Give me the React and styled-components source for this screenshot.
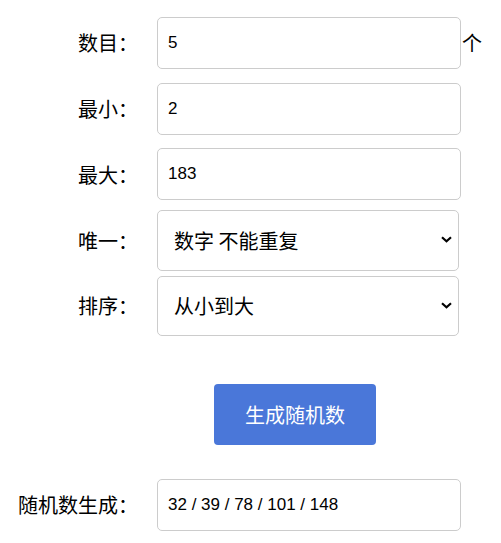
import React, { useState } from "react";
import styled, { createGlobalStyle } from "styled-components";

const GlobalStyle = createGlobalStyle`
  body {
    margin: 0;
    background: #ffffff;
    font-family: "Liberation Sans", "Noto Sans CJK SC", sans-serif;
    color: #000000;
  }
`;

const Page = styled.div`
  width: 501px;
  padding-top: 10px;
`;

const Row = styled.div`
  display: flex;
  align-items: center;
  height: 65.75px;
`;

const Label = styled.label`
  width: 138px;
  margin-right: 19px;
  text-align: right;
  font-size: 20px;
  font-family: "Noto Sans CJK SC", sans-serif;
  white-space: nowrap;
`;

const TextInput = styled.input`
  box-sizing: border-box;
  width: 304px;
  height: 52px;
  padding: 0 10px;
  border: 1px solid #cccccc;
  border-radius: 5px;
  font-size: 17px;
  font-family: "Liberation Sans", "Noto Sans CJK SC", sans-serif;
  color: #000000;
  outline: none;
`;

const Unit = styled.span`
  font-size: 20px;
  font-family: "Noto Sans CJK SC", sans-serif;
  margin-left: 1px;
`;

const SelectWrap = styled.div`
  position: relative;
  width: 302px;
  height: ${(p) => p.$height}px;
`;

const Select = styled.select`
  box-sizing: border-box;
  width: 100%;
  height: 100%;
  padding: 0 30px 0 16px;
  border: 1px solid #cccccc;
  border-radius: 5px;
  background: #ffffff;
  font-size: 20px;
  font-family: "Noto Sans CJK SC", sans-serif;
  color: #000000;
  appearance: none;
  outline: none;
`;

const Chevron = styled.svg`
  position: absolute;
  right: 7px;
  top: 50%;
  margin-top: -4px;
  pointer-events: none;
`;

const ButtonRow = styled.div`
  padding-left: 214px;
  margin-top: 45px;
`;

const Button = styled.button`
  width: 162px;
  height: 61px;
  border: none;
  border-radius: 4px;
  background: #4a77d9;
  color: #ffffff;
  font-size: 20px;
  font-family: "Noto Sans CJK SC", sans-serif;
  cursor: pointer;
`;

const ResultRow = styled(Row)`
  margin-top: 27px;
`;

function Dropdown({ height, value, options }) {
  return (
    <SelectWrap $height={height}>
      <Select defaultValue={value}>
        {options.map((o) => (
          <option key={o}>{o}</option>
        ))}
      </Select>
      <Chevron width="11" height="7" viewBox="0 0 11 7">
        <path d="M1 1.2 L5.5 5.2 L10 1.2" fill="none" stroke="#000" strokeWidth="2.2" />
      </Chevron>
    </SelectWrap>
  );
}

export default function App() {
  const [count, setCount] = useState("5");
  const [min, setMin] = useState("2");
  const [max, setMax] = useState("183");

  return (
    <Page>
      <GlobalStyle />
      <Row>
        <Label>数目：</Label>
        <TextInput value={count} onChange={(e) => setCount(e.target.value)} />
        <Unit>个</Unit>
      </Row>
      <Row>
        <Label>最小：</Label>
        <TextInput value={min} onChange={(e) => setMin(e.target.value)} />
      </Row>
      <Row>
        <Label>最大：</Label>
        <TextInput value={max} onChange={(e) => setMax(e.target.value)} />
      </Row>
      <Row>
        <Label>唯一：</Label>
        <Dropdown height={61} value="数字 不能重复" options={["数字 不能重复", "数字 可以重复"]} />
      </Row>
      <Row>
        <Label>排序：</Label>
        <Dropdown height={60} value="从小到大" options={["从小到大", "从大到小", "不排序"]} />
      </Row>
      <ButtonRow>
        <Button>生成随机数</Button>
      </ButtonRow>
      <ResultRow>
        <Label>随机数生成：</Label>
        <TextInput readOnly value="32 / 39 / 78 / 101 / 148" />
      </ResultRow>
    </Page>
  );
}
